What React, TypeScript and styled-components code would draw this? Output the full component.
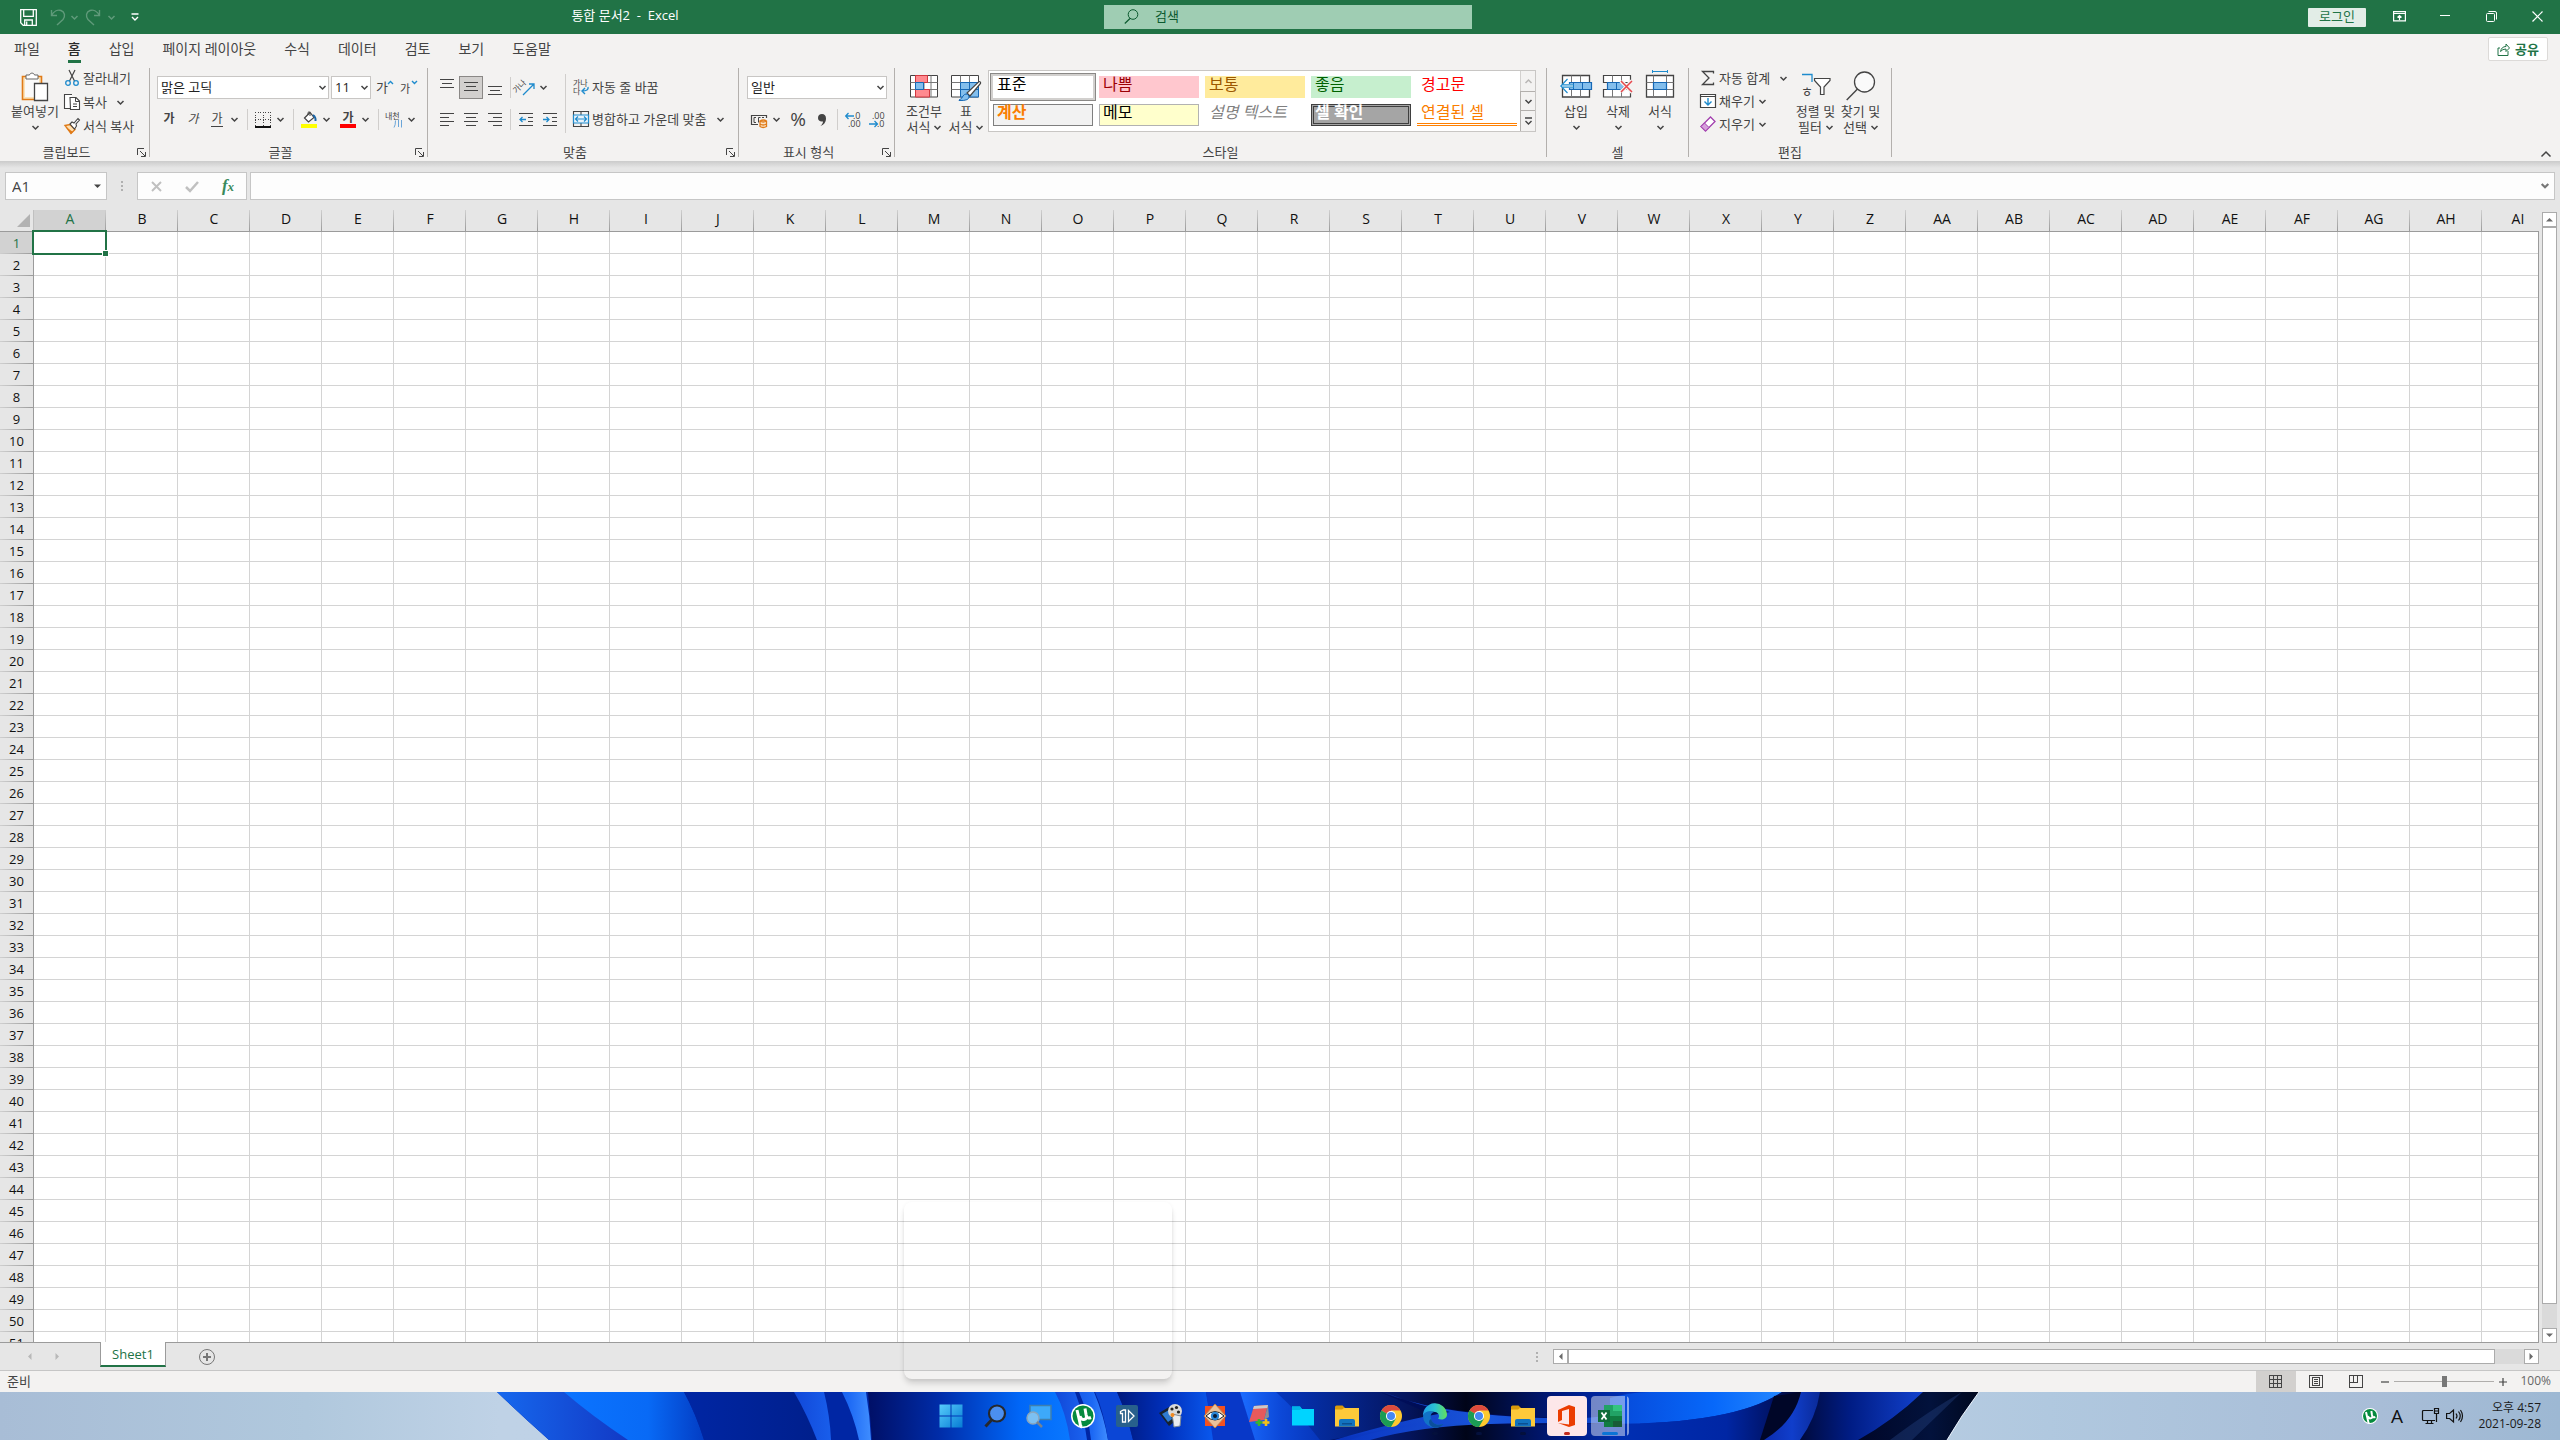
import React from 'react';
import styled, { createGlobalStyle, css } from 'styled-components';

const UI_FONT = '"Open Sans", "Noto Sans CJK KR", "Noto Sans", sans-serif';
const GREEN = '#217346';
const INK = '#444444';
const LINE = '#9b9b9b';
const BLUE = '#1e8bcd';

const GlobalStyle = createGlobalStyle`
  *, *::before, *::after { box-sizing: border-box; }
  body { margin: 0; background: #e6e6e6; overflow: hidden; }
  body, button, input, select, table {
    font-family: ${UI_FONT};
    font-size: 13px;
    line-height: 16px;
    color: ${INK};
  }
  button {
    display: inline-flex; align-items: center; justify-content: center;
    margin: 0; padding: 0; border: 0; background: none; white-space: nowrap;
  }
  input, select { margin: 0; border-radius: 0; outline: 0; }
  svg { display: block; flex: none; overflow: visible; }
`;

/* ---------- Frame ---------- */

const Window = styled.div`
  display: flex; flex-direction: column; height: 100vh; overflow: hidden;
`;

const TitleBar = styled.header`
  display: grid; grid-template-columns: 1104fr 368px 1088fr; align-items: center;
  flex: none; height: 34px; background: ${GREEN}; color: #fff;
`;
const TitleLeft = styled.div`display: flex; align-items: center;`;
const QuickAccess = styled.div`
  display: flex; align-items: center; gap: 3px; width: 146px; padding-left: 16px;
`;
const QuickButton = styled.button<{ $w?: number; $dim?: boolean }>`
  width: ${p => p.$w ?? 24}px; height: 24px; color: #fff; opacity: ${p => (p.$dim ? 0.28 : 1)};
`;
const DocTitle = styled.h1`
  flex: 1; margin: 0; padding-bottom: 4px; font-size: 13px; line-height: 16px; font-weight: 400;
  text-align: center; white-space: pre; color: #fff;
`;
const SearchBox = styled.label`
  display: flex; align-items: center; gap: 16px; height: 24px; padding-left: 20px; padding-bottom: 2px;
  background: #9fcdb3; color: #0b5a2f;
  input { flex: 1; min-width: 0; padding: 0; border: 0; background: none; color: #0b5a2f; }
  input::placeholder { color: #0b5a2f; opacity: 1; }
`;
const TitleRight = styled.div`display: flex; align-items: center; justify-content: flex-end;`;
const LoginButton = styled.button`
  width: 58px; height: 19px; margin: 0 10px 0 0; padding-bottom: 2px; border-radius: 1px; background: #e2ede7; color: ${GREEN};
`;
const WindowButton = styled.button`width: 46px; height: 34px; padding-bottom: 2px; color: #fff;`;

/* ---------- Ribbon ---------- */

const TabBar = styled.nav`
  display: flex; align-items: center; flex: none; height: 32px; background: #f3f2f1; padding-right: 12px;
`;
const Tab = styled.a<{ $active?: boolean }>`
  display: flex; flex-direction: column; margin: 0 14px; font-size: 14px; line-height: 22px;
  color: ${p => (p.$active ? '#2b2b2b' : INK)}; text-decoration: none; white-space: nowrap;
  font-weight: ${p => (p.$active ? 500 : 400)};
  &::after { content: ''; height: 3px; background: ${p => (p.$active ? GREEN : 'transparent')}; }
`;
const ShareButton = styled.button`
  gap: 5px; width: 60px; height: 24px; margin-left: auto; margin-bottom: 2px; border: 1px solid #dcdad8; border-radius: 2px;
  background: #fff; color: ${GREEN}; font-weight: 700;
`;
const Ribbon = styled.section`
  display: flex; flex: none; height: 95px; padding: 2px 0 4px; background: #f3f2f1;
`;
const Group = styled.div<{ $w: number }>`
  display: flex; flex-direction: column; flex: none; width: ${p => p.$w}px; border-right: 1px solid #b3b0ad;
`;
const GroupBody = styled.div<{ $left: number }>`
  display: flex; flex: 1; min-height: 0; padding-left: ${p => p.$left}px;
`;
const GroupFoot = styled.div`
  display: flex; align-items: flex-end; flex: none; height: 11px;
  span { flex: 1; text-align: center; line-height: 10px; }
  button { width: 16px; height: 9px; }
`;
const Lines = styled.div`display: flex; flex-direction: column; gap: 9px; padding-top: 8px;`;
const Line = styled.div`display: flex; align-items: center; height: 23px;`;
const List = styled.div<{ $gap: number; $w?: number }>`
  display: flex; flex-direction: column; gap: ${p => p.$gap}px;
  ${p => p.$w && css`width: ${p.$w}px;`}
`;
const ListItem = styled.div<{ $gap?: number }>`
  display: flex; align-items: center; height: 22px; gap: ${p => p.$gap ?? 6}px;
`;
const TextButton = styled.button`gap: 3px; height: 22px; padding-bottom: 2px;`;
const Tool = styled.button<{ $on?: boolean }>`
  width: 24px; height: 23px;
  ${p => p.$on && css`background: #d2d0ce; box-shadow: inset 0 0 0 1px #8a8886;`}
`;
const Drop = styled.button`width: 11px; height: 23px; margin-right: 1px; padding-bottom: 1px;`;
const Sep = styled.span<{ $lead?: number }>`
  flex: none; width: 1px; height: 21px; margin: 0 3px 0 ${p => p.$lead ?? 3}px; background: #d0cecc;
`;
const TallSep = styled.span`width: 1px; height: 59px; margin: 6px 7px 0 3px; background: #d0cecc;`;
const BigButton = styled.button<{ $w: number }>`
  flex-direction: column; justify-content: flex-start; flex: none; width: ${p => p.$w}px; padding-top: 2px;
`;
const BigIcon = styled.span`display: flex; align-items: center; justify-content: center; height: 32px; margin-bottom: 1px;`;
const BigLine = styled.span`display: flex; align-items: center; justify-content: center; gap: 4px; height: 16px;`;
const Spacer = styled.span`width: 3px;`;

const ComboBox = styled.span<{ $w: number }>`
  display: grid; width: ${p => p.$w}px; height: 23px; margin-right: 2px; background: #fff; border: 1px solid #c8c6c4;
  > * { grid-area: 1 / 1; }
  svg { justify-self: end; align-self: center; margin-right: 2px; pointer-events: none; }
  select { appearance: none; width: 100%; border: 0; padding: 0 3px 2px; background: none; color: #222; }
`;
const Glyph = styled.span<{ $b?: boolean; $i?: boolean; $u?: boolean; $size?: number }>`
  font-size: ${p => p.$size ?? 12}px; line-height: 14px; font-weight: ${p => (p.$b ? 700 : 400)};
  font-style: ${p => (p.$i ? 'italic' : 'normal')};
  border-bottom: 1px solid ${p => (p.$u ? INK : 'transparent')};
`;

/* ---------- Style gallery ---------- */

const Gallery = styled.div`
  display: flex; width: 548px; height: 62px; margin: 2px 0 0 1px; border: 1px solid #c8c6c4; background: #fff;
`;
const Swatches = styled.div`
  display: grid; grid-template-columns: repeat(5, 100px); gap: 6px; flex: 1; align-content: start; padding: 5px 0 0 4px;
`;
type Look = { bg?: string; fg: string; line?: string; look?: 'picked' | 'check' | 'linked' | 'note' | 'bold' };
const Swatch = styled.button<{ $s: Look }>`
  justify-content: flex-start; align-items: flex-start; height: 22px; padding-left: 4px; font-size: 16px; line-height: 17px;
  background: ${p => p.$s.bg ?? 'transparent'}; color: ${p => p.$s.fg};
  box-shadow: ${p => (p.$s.line ? `inset 0 0 0 1px ${p.$s.line}` : 'none')};
  ${p => p.$s.look === 'picked' && css`box-shadow: 0 0 0 2px #d2d0ce, 0 0 0 3px #8a8886;`}
  ${p => p.$s.look === 'check' && css`font-weight: 700; box-shadow: inset 0 0 0 1px #3f3f3f, inset 0 0 0 2px #a5a5a5, inset 0 0 0 3px #3f3f3f;`}
  ${p => p.$s.look === 'bold' && css`font-weight: 700;`}
  ${p => p.$s.look === 'note' && css`font-style: italic;`}
  ${p => p.$s.look === 'linked' && css`border-bottom: 3px double #ff8001;`}
`;
const GalleryScroll = styled.div`
  display: grid; grid-template-rows: 20px 19px 21px; width: 15px; background: #f3f2f1;
  button { border-left: 1px solid #b3b0ad; border-top: 1px solid #b3b0ad; }
  button:first-child { border-color: #d2d0ce; border-top: 0; }
`;
const CollapseButton = styled.button`width: 20px; height: 6px; margin: auto 4px 0 auto;`;

/* ---------- Formula bar ---------- */

const FormulaBar = styled.div`
  display: flex; flex: none; height: 49px; padding: 11px 5px 10px;
  background: linear-gradient(#cbcbcb, #e6e6e6 7px);
`;
const FieldBox = styled.div<{ $w?: number }>`
  display: flex; align-items: center; height: 28px; border: 1px solid #c6c6c6; background: #fdfdfd;
  ${p => (p.$w ? css`width: ${p.$w}px;` : css`flex: 1;`)}
  input { flex: 1; min-width: 0; height: 26px; padding: 0 6px; border: 0; background: none; font-size: 15px; }
  button { width: 18px; height: 26px; }
`;
const MarkBox = styled(FieldBox)`
  justify-content: space-between; padding: 0 6px; margin-right: 3px;
  button { width: 24px; }
`;
const Grip = styled.span<{ $before: number; $after: number }>`
  width: 2px; height: 10px; align-self: center; margin: 0 ${p => p.$after}px 0 ${p => p.$before}px;
  background: repeating-linear-gradient(#b0b0b0 0 2px, transparent 2px 4px);
`;
const FxMark = styled.i`
  font-family: "Liberation Serif", serif; font-size: 13px; font-weight: 700; color: #3a8a5c;
  b { font-size: 17px; }
`;

/* ---------- Sheet ---------- */

const SheetArea = styled.main`display: flex; flex: 1; min-height: 0; background: #e6e6e6;`;
const SheetPane = styled.div`
  display: flex; flex: 1; min-width: 0; padding: 0 1px 1px 0;
  background: linear-gradient(#e6e6e6 21px, ${LINE} 21px);
`;
const SheetClip = styled.div`flex: 1; min-width: 0; overflow: hidden; background: #e6e6e6;`;
const Sheet = styled.table`
  table-layout: fixed; border-collapse: separate; border-spacing: 0; width: 2554px; color: #111;
  th, td { height: 22px; padding: 0; line-height: 20px; font-weight: 400; text-align: center; }
  thead th { padding-bottom: 3px; line-height: 18px; }
  td { background: #fff; border-right: 1px solid #d4d4d4; border-bottom: 1px solid #d4d4d4; }
`;
const ColHead = styled.th<{ $on?: boolean }>`
  width: 72px; font-size: 14px; border-bottom: 1px solid ${LINE};
  color: ${p => (p.$on ? GREEN : '#111')};
  background: linear-gradient(#cfcfcf, ${LINE}) right / 1px 100% no-repeat, ${p => (p.$on ? '#d2d2d2' : '#e6e6e6')};
`;
const RowHead = styled.th<{ $on?: boolean }>`
  border-right: 1px solid ${LINE};
  color: ${p => (p.$on ? GREEN : '#111')};
  background: linear-gradient(90deg, #cfcfcf, ${LINE}) bottom / 100% 1px no-repeat, ${p => (p.$on ? '#d2d2d2' : '#e6e6e6')};
`;
const Corner = styled.th`
  width: 34px; border-right: 1px solid #c0c0c0; border-bottom: 1px solid ${LINE};
  svg { margin: 2px 3px 0 auto; }
`;
const ActiveCell = styled.td`
  position: relative;
  &::before { content: ''; position: absolute; inset: -2px; border: 2px solid ${GREEN}; }
  &::after {
    content: ''; position: absolute; right: -4px; bottom: -4px; width: 7px; height: 7px;
    border: 1px solid #fff; background: ${GREEN};
  }
`;

const VScroll = styled.div`display: flex; flex-direction: column; width: 21px; padding: 2px 3px 0;`;
const HScroll = styled.div`display: flex; width: 986px; margin-right: 21px;`;
const ScrollButton = styled.button`
  flex: none; width: 15px; height: 15px; background: #fff; border: 1px solid #ababab; color: #6a6a6a;
`;
const VTrack = styled.div`
  flex: 1; padding-bottom: 24px; background: #dadada;
  div { height: 100%; background: #fff; border: 1px solid #ababab; }
`;
const HTrack = styled.div`
  flex: 1; padding-right: 29px; background: #dadada;
  div { height: 15px; background: #fff; border: 1px solid #ababab; }
`;

const SheetTabs = styled.div`
  display: flex; align-items: center; flex: none; height: 28px; padding-left: 15px; background: #e6e6e6; border-bottom: 1px solid #c6c6c6;
`;
const NavButton = styled.button`width: 28px; height: 24px; color: #b8b8b8;`;
const SheetTab = styled.button`
  align-self: flex-start; width: 66px; height: 25px; margin: -1px 32px 0 29px; background: #fff; color: ${GREEN};
  border: 1px solid ${LINE}; border-top: 0; border-bottom: 2px solid ${GREEN}; font-weight: 500;
`;
const AddSheet = styled.button`width: 18px; height: 18px;`;
const Push = styled.span`flex: 1;`;

const StatusBar = styled.footer`
  display: flex; align-items: center; flex: none; height: 21px; padding-left: 7px; padding-right: 9px; background: #f3f2f1;
  > span { padding-bottom: 1px; }
`;
const ViewButton = styled.button<{ $on?: boolean }>`
  width: 40px; height: 21px; background: ${p => (p.$on ? '#d2d0ce' : 'none')};
`;
const ZoomStep = styled.button`width: 12px; height: 16px;`;
const ZoomSlider = styled.input`
  appearance: none; width: 100px; height: 12px; margin: 0 3px; background: linear-gradient(#b0aeac, #b0aeac) center / 100% 1px no-repeat;
  &::-webkit-slider-thumb { appearance: none; width: 5px; height: 11px; background: #777; }
`;
const ZoomValue = styled.span`width: 41px; margin-left: 1px; font-size: 12px; text-align: right; color: #666;`;

/* ---------- Taskbar ---------- */

const PreviewShade = styled.div`
  position: fixed; left: calc(50% - 376px); bottom: 61px; width: 268px; height: 177px; border-radius: 8px;
  box-shadow: 0 5px 6px -1px rgba(0, 0, 0, 0.16), 0 1px 4px rgba(0, 0, 0, 0.06); pointer-events: none;
`;
const TaskBar = styled.div`
  position: relative; display: grid; grid-template-columns: 1fr auto 1fr; align-items: center; flex: none; height: 48px;
`;
const Wallpaper = styled.svg`position: absolute; inset: 0; width: 100%; height: 100%;`;
const Pinned = styled.div`position: relative; grid-column: 2; display: flex; padding-left: 2px;`;
const Pin = styled.button<{ $state?: 'alert' | 'open' }>`
  position: relative; width: 40px; height: 40px; margin: 0 2px; border-radius: 4px;
  ${p => p.$state === 'alert' && css`background: #fde7e9;`}
  ${p => p.$state === 'open' && css`
    width: 38px; margin: 0 4px 0 2px; background: linear-gradient(90deg, rgba(255,255,255,.45) 34px, transparent 34px 36px, rgba(255,255,255,.5) 36px);
  `}
`;
const Marker = styled.i<{ $c: string; $w: number }>`
  position: absolute; left: 50%; bottom: 1px; width: ${p => p.$w}px; height: 3px; margin-left: -${p => p.$w / 2}px;
  border-radius: 2px; background: ${p => p.$c};
`;
const Tray = styled.div`
  position: relative; display: flex; align-items: center; justify-content: flex-end; padding-right: 19px; color: #111;
`;
const TrayButton = styled.button<{ $w: number }>`width: ${p => p.$w}px; height: 32px; color: #111; font-size: 19px;`;
const Clock = styled.time`
  width: 77px; margin-left: 1px; font-size: 12px; line-height: 16px; text-align: right; color: #1b1b1b; white-space: nowrap;
`;

/* ---------- Icons ---------- */

const Chevron = ({ up, color = INK }: { up?: boolean; color?: string }) => (
  <svg width="7" height="5" viewBox="0 0 7 5" fill="none" stroke={color} strokeWidth="1.5">
    <path d={up ? 'M.5 4l3-3 3 3' : 'M.5 1l3 3 3-3'} />
  </svg>
);
const Tri = ({ d }: { d: string }) => <svg width="7" height="7" viewBox="0 0 7 7" fill="currentColor"><path d={d} /></svg>;
const UP = 'M0 5.5h7L3.5 2z', DOWN = 'M0 1.5h7L3.5 5z', LEFT = 'M5.5 0v7L2 3.5z', RIGHT = 'M1.5 0v7L5 3.5z';

const Svg = ({ w = 16, h = 16, children, ...rest }: React.SVGProps<SVGSVGElement> & { w?: number; h?: number }) => (
  <svg width={w} height={h} viewBox={`0 0 ${w} ${h}`} fill="none" stroke={INK} {...rest}>{children}</svg>
);

const Launcher = () => <Svg w={9} h={9}><path d="M.5 7V.5H7M3 3l5 5M8.500 4v4.500H4" /></Svg>;
const SaveIcon = () => <Svg w={17} h={17} stroke="currentColor"><path d="M.7.7h15.600v15.600H3.200L.7 13.800zM3.700 1v6.300h9.600V1M4.700 16v-5h7.600v5M6.700 12.500V16" strokeWidth="1.300" /></Svg>;
const UndoIcon = () => <Svg stroke="currentColor"><path d="M1.500 1v5.500H7M1.500 6.500C4 2 8 .5 11 1.500c4 1.500 4.500 6 2 9L7 16" strokeWidth="1.400" /></Svg>;
const RedoIcon = () => <Svg stroke="currentColor"><path d="M14.500 1v5.500H9M14.500 6.500C12 2 8 .5 5 1.500c-4 1.500-4.500 6-2 9L9 16" strokeWidth="1.400" /></Svg>;

const PasteIcon = () => (
  <Svg w={28} h={31}>
    <path d="M1.500 5.500h19v23h-19z" fill="#fbe3b9" stroke="#e07b18" strokeWidth="1.600" />
    <path d="M4 8h14v18H4z" fill="#fafafa" stroke="none" />
    <path d="M5 8V4h3.500C9 1.500 13 1.500 13.500 4H17v4z" fill="#fff" stroke="#666" />
    <path d="M13.500 12.500h13v17h-13z" fill="#fff" strokeWidth="1.300" />
  </Svg>
);
const CutIcon = () => (
  <Svg><path d="M5 0l5.500 11M11 0L5.500 11" strokeWidth="1.200" /><g stroke={BLUE} strokeWidth="1.300"><circle cx="4" cy="13" r="2.300" /><circle cx="12" cy="13" r="2.300" /></g></Svg>
);
const CopyIcon = () => (
  <Svg><path d="M6.500 14.500h-6V.5H8M6 3.500h6l3.500 3.500v8.500H6.500z" fill="#fff" strokeWidth="1.100" /><path d="M11.500 3.500v4h4M9 10h4M9 12.500h4" /></Svg>
);
const BrushIcon = () => (
  <Svg><path d="M1 7.500l5-1 5 5-4 4z" fill="#ffe0b0" stroke="#e07b18" strokeWidth="1.400" /><path d="M2 9l7 5-2 2z" fill="#e07b18" stroke="none" /><path d="M6 6l2-2 2 1 4-4.500 1.500 1.500L12 6l.5 2-2 3z" fill="#fff" strokeWidth="1.100" /></Svg>
);
const BordersIcon = () => (
  <Svg shapeRendering="crispEdges"><path d="M.5 0v14M15.500 0v14M0 .5h16M8 0v14M0 7.500h16" strokeDasharray="1 1.500" /><path d="M0 15h16" stroke="#111" strokeWidth="2" /></Svg>
);
const FillIcon = () => (
  <Svg w={16} h={17}><path d="M3.500 7L9 1.500l4 5L7.500 11z" fill="#fff" strokeWidth="1.200" /><path d="M7 4V1.500Q8 0 9 1.500V5" /><path d="M12 4q3 2 2.500 6" stroke="#1a66a8" strokeWidth="2" /><path d="M0 13h16v4H0z" fill="#ff0" stroke="none" /></Svg>
);
const ColorBar = styled.span`
  display: flex; flex-direction: column; align-items: center; width: 16px; border-bottom: 4px solid #f00;
  font-size: 12px; line-height: 13px; font-weight: 700;
`;
const KoText = ({ x, y, size = 8, children, ...rest }: React.SVGProps<SVGTextElement> & { size?: number }) => (
  <text x={x} y={y} fontSize={size} fill={INK} stroke="none" {...rest}>{children}</text>
);
const PhoneticIcon = () => (
  <Svg w={18} h={17}><KoText x="0" y="8" size={8}>내천</KoText><path d="M10.500 9.500q0 5-1.500 7M13.500 9v7M16.500 9v7.500" stroke="#6aa5d8" /></Svg>
);
const GrowIcon = ({ down }: { down?: boolean }) => (
  <Svg w={18} h={16}>
    <KoText x="0" y={down ? 13 : 12} size={down ? 11 : 13}>가</KoText>
    <path d={down ? 'M12 1l2.500 2.500L17 1' : 'M12 4l2.500-2.500L17 4'} stroke={BLUE} strokeWidth="1.400" />
  </Svg>
);

/* Horizontal text lines: each entry is [start, end] at a 4px pitch. */
const TextLines = ({ rows, top = 1 }: { rows: number[][]; top?: number }) => (
  <Svg w={14} h={13} shapeRendering="crispEdges">
    <path d={rows.map((r, i) => `M${r[0]} ${top + i * 4 + 0.5}H${r[1]}`).join('')} />
  </Svg>
);
const SHORT = [[0, 14], [2, 12], [0, 14]];
const L4 = [[0, 14], [0, 9], [0, 14], [0, 9]];
const C4 = [[0, 14], [2, 12], [0, 14], [2, 12]];
const R4 = [[0, 14], [5, 14], [0, 14], [5, 14]];

const OrientIcon = () => (
  <Svg w={17}><KoText x="-4" y="8" size={8} transform="rotate(-45 4 8)">가나</KoText><path d="M5 15L15.500 4.500M11 4h5v5" stroke={BLUE} strokeWidth="1.300" /></Svg>
);
const IndentIcon = ({ more }: { more?: boolean }) => (
  <Svg w={14} h={13} shapeRendering="crispEdges">
    <path d="M0 .5h14M9 4.500h5M9 8.500h5M0 12.500h14" />
    <path d={more ? 'M0 6.500h6M3.500 4l2.500 2.500L3.500 9' : 'M1 6.500h6M3.500 4L1 6.500 3.500 9'} stroke={BLUE} shapeRendering="auto" strokeWidth="1.300" />
  </Svg>
);
const WrapIcon = () => (
  <Svg><KoText x="0" y="7">가나</KoText><KoText x="0" y="15">다</KoText><path d="M15 8q1 4-6 4M12 9l-3 3 3 3" stroke={BLUE} strokeWidth="1.400" /></Svg>
);
const MergeIcon = () => (
  <Svg><path d="M.5.5h15v15H.5zM8 .5v4M8 12v3.500" strokeWidth="1.100" /><path d="M.5 4h15v8H.5zM3 8h10M5 5.500L2.500 8 5 10.500M11 5.500L13.500 8 11 10.500" fill="#e8f3fb" stroke={BLUE} strokeWidth="1.200" /></Svg>
);
const MoneyIcon = () => (
  <Svg w={17}><path d="M15.500 6V3.500H.5v9H7" strokeWidth="1.200" /><path d="M5 5.500H3v5h2M9.500 5.500H7.500v5M11 5.500h2" /><path d="M9 9v5.500q3 2 6.500 0V9q-3-2-6.500 0q3 2 6.500 0M9 12q3 2 6.500 0" fill="#fbe3c8" stroke="#e07b18" strokeWidth="1.300" /></Svg>
);
const CommaIcon = () => <Svg w={8} h={12}><path d="M4 0c2.500 0 4 1.500 4 4.500 0 4-2.500 6.500-5.500 7.500C4 10.500 5 9 5 7.500 2 8 0 6.500 0 4c0-2.500 1.500-4 4-4z" fill={INK} stroke="none" /></Svg>;
const DecimalIcon = ({ less }: { less?: boolean }) => (
  <Svg w={17}>
    <text fontSize="9" fill={INK} stroke="none"><tspan x={less ? 3 : 8} y="7">{less ? '.00' : '.0'}</tspan><tspan x={less ? 8 : 3} y="15">{less ? '.0' : '.00'}</tspan></text>
    <path d={less ? 'M0 12h8M5.500 9L8.500 12l-3 3' : 'M9 4H1M3.500 1L.7 4l2.800 3'} stroke={BLUE} strokeWidth="1.300" />
  </Svg>
);

const CondIcon = () => (
  <Svg w={28} h={28}>
    <path d="M.5 3.500h27v21.500H.5z" fill="#fff" /><path d="M7 3.500V25M14 3.500V25M21 3.500V25M.5 10.500h27M.5 17.500h27" stroke="#777" />
    <path d="M5.500 3.500h12v7h-12zM5.500 17.500h14V25h-14z" fill="#ff8a8f" stroke="#d1373f" /><path d="M5.500 10.500h8v7h-8z" fill="#83beec" stroke="#1668b5" />
  </Svg>
);
const TableIcon = () => (
  <Svg w={30} h={28}>
    <path d="M.5 3.500h27v21.500H.5z" fill="#fff" /><path d="M9.500 3.500V25M18.500 3.500V25M.5 10.500h27M.5 17.500h27" stroke="#777" />
    <path d="M9.500 10.500h18V25h-18z" fill="#83beec" stroke="#1668b5" /><path d="M9.500 17.500h18M18.500 10.500V25" stroke="#1668b5" />
    <path d="M28 9.500q2 0 1.500 2L19 24l-3-3z" fill="#fff" strokeWidth="1.200" /><path d="M8 28q3-1 4-4 3-4 6 0 1 5-10 4.500z" fill="#83beec" stroke="#1668b5" />
  </Svg>
);
const InsertIcon = () => (
  <Svg w={32} h={28}>
    <path d="M2.500 3.500h27v21.500h-27z" fill="#fff" strokeWidth="1.300" /><path d="M11.500 3.500V25M20.500 3.500V25" stroke="#777" />
    <path d="M9.500 10.500h22v7h-22z" fill="#83beec" stroke="#1668b5" strokeWidth="1.200" /><path d="M13.500 11v6M22.500 11v6" stroke="#1668b5" />
    <path d="M0 14h13" stroke="#fff" strokeWidth="4" /><path d="M7.500 7L.8 14l6.700 7M2 12.800h12M2 15.200h12" stroke={BLUE} strokeWidth="1.200" />
  </Svg>
);
const DeleteIcon = () => (
  <Svg w={30} h={28}>
    <path d="M.5 3.500h27v7H.5zM.5 17.500h27V25H.5z" fill="#fff" strokeWidth="1.200" /><path d="M9.500 3.500v7M18.500 3.500v7M9.500 17.500V25M18.500 17.500V25" stroke="#777" />
    <path d="M4.500 10.500h14l3 3.500-3 3.500h-14z" fill="#83beec" stroke="#1668b5" strokeWidth="1.200" /><path d="M13.500 11v6" stroke="#1668b5" />
    <path d="M18 9l11 11M29 9L18 20" stroke="#f3f2f1" strokeWidth="4" /><path d="M18 9l11 11M29 9L18 20" stroke="#e8474c" strokeWidth="1.500" />
  </Svg>
);
const FormatIcon = () => (
  <Svg w={28} h={32}>
    <path d="M.5 5.500h27v21.500H.5z" fill="#fff" strokeWidth="1.300" /><path d="M7.500 5.500V27M20.500 5.500V27M.5 12.500h27M.5 19.500h27" stroke="#777" />
    <path d="M7.500 12.500h13v7h-13z" fill="#83beec" stroke="#1668b5" strokeWidth="1.200" /><path d="M6.500 1.500h15M6.500 0v3M21.500 0v3" stroke={BLUE} />
  </Svg>
);
const SumIcon = () => <Svg><path d="M13.500 3.500V1.500H2.500L9 8l-6.500 6.500h11v-2" strokeWidth="1.300" /></Svg>;
const FillDownIcon = () => <Svg><path d="M.5 1.500h15v13H.5zM.5 3.500h15" fill="#fff" strokeWidth="1.200" /><path d="M8 5v7M4.500 8.500L8 12l3.500-3.500" stroke={BLUE} strokeWidth="1.400" /></Svg>;
const EraserIcon = () => <Svg><path d="M1 10.500L10.500 1l4.500 4.500L5.500 15z" fill="#fff" stroke="#a23fae" strokeWidth="1.300" /><path d="M1 10.500L4.500 7 9 11.500 5.500 15z" fill="#d6a0dc" stroke="#a23fae" /></Svg>;
const SortIcon = () => (
  <Svg w={30} h={24}><path d="M1 .5h10V8" stroke={BLUE} strokeWidth="1.300" /><KoText x="0" y="22" size={13}>ㅎ</KoText><path d="M13.500 4.500h15.500v2L23 13v7.500h-3.500V13l-6-6.500z" fill="#fff" strokeWidth="1.200" /></Svg>
);
const FindIcon = () => <Svg w={30} h={30}><circle cx="18.500" cy="11" r="10" fill="#fafafa" strokeWidth="1.300" /><path d="M11.500 18L.7 29" strokeWidth="1.400" /></Svg>;
const ShareIcon = () => <Svg w={13} h={13} stroke="currentColor"><path d="M3 5H1v7.500h10V8M3.500 8.500q1-5 5.500-5V1l3.500 4L9 8.500V6q-3.500 0-5.500 2.500z" /></Svg>;

/* ---------- Taskbar icons ---------- */

const Torrent = ({ size = 24 }: { size?: number }) => (
  <svg width={size} height={size} viewBox="0 0 24 24">
    <circle cx="12" cy="12" r="12" fill="#fff" /><circle cx="12" cy="12" r="10.500" fill="#058a3e" />
    <path d="M6 6l3 13q.3 3.500 2 4M9 12q1 4 4 3.500 3.500-.5 2-5L14 4.500M15.500 12q1 3 4.500 1.500" fill="none" stroke="#fff" strokeWidth="3" />
  </svg>
);
const Chrome = () => (
  <svg width="22" height="22" viewBox="0 0 24 24">
    <circle cx="12" cy="12" r="12" fill="#fdc92f" />
    <path d="M12 12L1.600 6A12 12 0 0 1 22.400 6H12z" fill="#dd4b3e" /><path d="M12 12L1.600 6A12 12 0 0 0 12 24l5.200-9z" fill="#1b9c55" />
    <circle cx="12" cy="12" r="5.500" fill="#fff" /><circle cx="12" cy="12" r="4.400" fill="#4587f3" />
  </svg>
);
const Explorer = () => (
  <svg width="24" height="22" viewBox="0 0 24 22">
    <path d="M0 2q0-1.500 1.500-1.500h6L10 3v3H0z" fill="#d99a0b" /><path d="M0 4.500h7L9 3h15v18.500H0z" fill="#fdc93a" /><path d="M4 21.500V16q0-2 2-2h12q2 0 2 2v5.500z" fill="#1273c0" /><path d="M7 18h10v1.500H7z" fill="#0b4f91" />
  </svg>
);
const StartIcon = () => (
  <svg width="24" height="24" viewBox="0 0 24 24">
    <defs><linearGradient id="win" x2="1" y2="1"><stop stopColor="#57cdfb" /><stop offset="1" stopColor="#067bd4" /></linearGradient></defs>
    <path d="M.5.500h11v11H.5zM12.500.500h11v11h-11zM.5 12.500h11v11H.5zM12.500 12.500h11v11h-11z" fill="url(#win)" />
  </svg>
);
const TaskSearch = () => <svg width="24" height="24" viewBox="0 0 24 24"><circle cx="14" cy="9.500" r="8" fill="#4b8ff0" stroke="#26282c" strokeWidth="2.200" /><path d="M8.500 16L2.500 22.500" stroke="#26282c" strokeWidth="3" /></svg>;
const TaskView = () => <svg width="26" height="24" viewBox="0 0 26 24"><path d="M4 1.500h21v14H4z" fill="#3da9fa" stroke="#3f7fae" strokeWidth="1.500" /><circle cx="7" cy="14" r="6" fill="#7cc0f2" stroke="#8aa6bd" strokeWidth="1.500" /><path d="M11 18l5 5" stroke="#758392" strokeWidth="2.500" /></svg>;
const OneD = () => (
  <svg width="22" height="22" viewBox="0 0 22 22"><rect width="22" height="22" rx="2" fill="#28608c" /><path d="M4.500 6.500l3-1.500h2v12h-3V8.500h-2zM12.500 5.500v11L18 11z" fill="none" stroke="#fff" strokeWidth="1.300" /></svg>
);
const Reel = () => (
  <svg width="26" height="24" viewBox="0 0 26 24">
    <path d="M1 9l10-6 5 15-5 4z" fill="#17222e" /><path d="M4 10l7-4 3 9-4 3z" fill="#2f7bd0" /><circle cx="17" cy="7" r="7" fill="#d9d9d9" /><g fill="#222"><circle cx="14" cy="5" r="1.600" /><circle cx="18.500" cy="3.500" r="1.600" /><circle cx="20.500" cy="8" r="1.600" /></g>
    <path d="M14 10l9 2-1 10-6 1z" fill="#e9ecf0" stroke="#7c8a99" /><circle cx="14.500" cy="11" r="2" fill="#f08a24" />
  </svg>
);
const EyeIcon = () => (
  <svg width="24" height="24" viewBox="0 0 24 24"><path d="M2 2h20v20H2z" fill="#f4511e" /><path d="M12 0l11 12-11 12L1 12z" fill="#eac19a" stroke="#b97d4d" /><path d="M3 12q9-9 18 0-9 8-18 0z" fill="#fff" stroke="#222" /><circle cx="12" cy="12" r="4.200" fill="#2a86d6" /><circle cx="12" cy="12" r="2" fill="#0a1b33" /></svg>
);
const NoteIcon = () => (
  <svg width="24" height="24" viewBox="0 0 24 24"><path d="M7 2l14-1-4 15-15 2z" fill="#e65a5c" /><path d="M7 2l14-1v3L6 5z" fill="#c9c9c9" /><path d="M17 16l4-15 1 12z" fill="#8b8f94" /><path d="M12 15v7M8.500 18.500h7" stroke="#3cb52d" strokeWidth="2.600" /><path d="M19 15v7M15.500 18.500h7" stroke="#f3c21a" strokeWidth="2.600" /></svg>
);
const CyanFolder = () => <svg width="22" height="20" viewBox="0 0 22 20"><path d="M0 .500h8l2 2.500h12v16.500H0z" fill="#00d4ff" /><path d="M0 .500h8l1.500 2L8 4H0z" fill="#00b4e8" /></svg>;
const Edge = () => (
  <svg width="24" height="24" viewBox="0 0 24 24">
    <defs><linearGradient id="eg" x2="1"><stop stopColor="#1f9fe8" /><stop offset=".5" stopColor="#2cc3d2" /><stop offset="1" stopColor="#63e05c" /></linearGradient></defs>
    <path d="M0 12A12 12 0 0 1 24 10.500c0 5-6 6-9 4 2-2 1-6-3-6.500C6 7 1 9 0 12z" fill="url(#eg)" /><path d="M0 12c1-4 6-6 11-4-3 1-4 4-3 7 1.500 5 7 7 12.500 5A12 12 0 0 1 0 12z" fill="#1273c8" /><path d="M8 15c1.500 5 7 7 12.500 5-3 4-9 5-12.500 2-3-3-2-6 0-7z" fill="#0b4f9c" />
  </svg>
);
const Office = () => <svg width="20" height="22" viewBox="0 0 20 22"><path d="M12 0l6 2v18l-6 2-11-4 11 1.500V4L5 6v9l-4 2V5z" fill="#eb3c00" /></svg>;
const ExcelIcon = () => (
  <svg width="24" height="22" viewBox="0 0 24 22">
    <path d="M6 0h18v22H6z" fill="#21a366" /><path d="M15 0h9v6h-9z" fill="#33c481" /><path d="M6 11h18v11H6z" fill="#107c41" /><path d="M15 16h9v6h-9z" fill="#185c37" /><path d="M0 5h12v12H0z" fill="#0f6b39" />
    <path d="M3.500 7.500l5 7M8.500 7.500l-5 7" stroke="#fff" strokeWidth="1.800" />
  </svg>
);

const Backdrop = () => (
  <Wallpaper viewBox="0 0 2560 48" preserveAspectRatio="none" aria-hidden="true">
    <defs>
      {([
        ['sky', ['0:#a8bdd6', '.12:#b0c8dd', '.195:#bfd2e6', '.7:#bccfe4', '.8:#b0c8df', '.93:#a8bdd7', '1:#9db8d3']],
        ['g1', ['0:#1668ee', '1:#1238c4']], ['g2', ['0:#0b74ff', '.6:#086af6', '1:#033dc4']], ['g3', ['0:#0026a4', '1:#001f8c']],
        ['g4', ['0:#1148d8', '.7:#1c68f4', '1:#3f8dff']],
        ['g5', ['0:#000f66', '.35:#002ca8', '.75:#0067f8', '1:#0a78ff']], ['g6', ['0:#00187c', '.5:#0030bc', '1:#0a5af0']],
        ['g7', ['0:#1b6cff', '.5:#0c48d8', '1:#0634b8']], ['g8', ['0:#0536bc', '.35:#04145c', '.5:#000418', '.75:#001a80', '1:#0038c8']],
        ['g9', ['0:#0a38cc', '.5:#1e62f4', '1:#0a46d4']], ['g10', ['0:#0648d8', '.6:#0768fa', '1:#2386ff']],
        ['g11', ['0:#0030b4', '.6:#0026a4', '.85:#001262', '1:#000320']], ['g12', ['0:#0b2cae', '.5:#103ecb', '1:#0a2a98']],
        ['g13', ['0:#000a3c', '.4:#001c84', '1:#1242cf']], ['g14', ['0:#000628', '.6:#02123c', '1:#00081e']],
      ] as [string, string[]][]).map(([id, stops]) => (
        <linearGradient id={id} key={id}>
          {stops.map(s => { const [o, c] = s.split(':'); return <stop key={o} offset={o} stopColor={c} />; })}
        </linearGradient>
      ))}
    </defs>
    <rect width="2560" height="48" fill="url(#sky)" />
    <path d="M497 0H1979Q1962 22 1947 48H549Q522 24 497 0z" fill="#0026a4" />
    <path d="M497 0h70l64 48h-82Q522 24 497 0z" fill="url(#g1)" />
    <path d="M564 0h120q12 22 20 48h-76Q592 24 564 0z" fill="url(#g2)" />
    <path d="M684 0h112l21 48H704Q696 22 684 0z" fill="url(#g3)" />
    <path d="M794 0h30q6 24 7 48h-14Q808 24 794 0zM842 0h24q4 24 5 48h-12Q854 24 842 0z" fill="url(#g4)" />
    <path d="M868 0h188q12 24 15 48H872z" fill="url(#g5)" />
    <path d="M1055 0h20q9 24 12 48h-17Q1066 20 1055 0zM1079 0h15q10 24 14 48h-17Q1088 20 1079 0z" fill="url(#g4)" />
    <path d="M1095 0h22q10 22 16 48h-25Q1104 20 1095 0z" fill="#0b46d6" />
    <path d="M1117 0h89l9 48h-82Q1127 22 1117 0z" fill="url(#g6)" />
    <path d="M1206 0h34l16 48h-43z" fill="#0838c8" />
    <path d="M1240 0h40l42 48h-67z" fill="url(#g7)" />
    <path d="M1276 0h380v48h-336Q1300 22 1276 0z" fill="url(#g8)" />
    <path d="M1380 0q50 19 140 24t120-2v8q-80 4-160 2t-130 16h210V48H1330Q1400 34 1440 26z" fill="#000d58" opacity=".8" />
    <path d="M1383 0q47 20 137 25t120-9v16q-80-2-150 0t-120 16h-36Q1410 26 1450 20 1420 14 1383 0z" fill="url(#g9)" opacity=".85" />
    <path d="M1610 6q20-6 40-6h132Q1735 32 1610 32z" fill="url(#g10)" />
    <path d="M1610 32Q1735 32 1782 0h22l-34 48H1610z" fill="url(#g11)" />
    <path d="M1774 4L1804 0q-5 22-22 48h-22z" fill="#000628" />
    <path d="M1801 0h19q-4 26-20 48h-36q30-18 37-48z" fill="url(#g12)" />
    <path d="M1820 0h104q-30 28-66 48h-58q16-22 20-48z" fill="url(#g13)" />
    <path d="M1923 0h56q-18 24-32 48h-89q36-20 65-48z" fill="url(#g14)" />
    <path d="M1890 48q40-30 72-48l-50 48z" fill="#2a4a8c" opacity=".35" />
    <path d="M1979 0q-18 24-32 48" fill="none" stroke="#eef4fa" strokeWidth="1" />
  </Wallpaper>
);

/* ---------- Data ---------- */

const columnName = (i: number) => (i < 26 ? '' : 'A') + String.fromCharCode(65 + (i % 26));
const COLUMNS = Array.from({ length: 35 }, (_, i) => columnName(i));
const ROWS = Array.from({ length: 51 }, (_, i) => i + 1);
const TABS = ['파일', '홈', '삽입', '페이지 레이아웃', '수식', '데이터', '검토', '보기', '도움말'];
const STYLES: [string, Look][] = [
  ['표준', { bg: '#fff', fg: '#000', look: 'picked' }],
  ['나쁨', { bg: '#ffc7ce', fg: '#9c0006' }],
  ['보통', { bg: '#ffeb9c', fg: '#9c5700' }],
  ['좋음', { bg: '#c6efce', fg: '#006100' }],
  ['경고문', { fg: '#ff0000' }],
  ['계산', { bg: '#f2f2f2', fg: '#fa7d00', line: '#7f7f7f', look: 'bold' }],
  ['메모', { bg: '#ffffcc', fg: '#000', line: '#b2b2b2' }],
  ['설명 텍스트', { fg: '#7f7f7f', look: 'note' }],
  ['셀 확인', { bg: '#a5a5a5', fg: '#fff', look: 'check' }],
  ['연결된 셀', { fg: '#fa7d00', look: 'linked' }],
];

const DropButton = ({ of }: { of: string }) => <Drop aria-label={`${of} 옵션`}><Chevron /></Drop>;

const Combo = ({ w, label, value }: { w: number; label: string; value: string }) => (
  <ComboBox $w={w}><select aria-label={label} defaultValue={value}><option>{value}</option></select><Chevron /></ComboBox>
);

const Big = ({ w = 42, icon, line1, line2 }: { w?: number; icon: React.ReactNode; line1: string; line2?: string }) => (
  <BigButton $w={w}><BigIcon>{icon}</BigIcon><BigLine>{line1}</BigLine><BigLine>{line2}<Chevron /></BigLine></BigButton>
);

const RibbonGroup = ({ w, left, name, launcher, children }: { w: number; left: number; name: string; launcher?: boolean; children: React.ReactNode }) => (
  <Group $w={w}>
    <GroupBody $left={left}>{children}</GroupBody>
    <GroupFoot><span>{name}</span>{launcher && <button aria-label={`${name} 설정`}><Launcher /></button>}</GroupFoot>
  </Group>
);

export default function App() {
  return (
    <Window>
      <GlobalStyle />
      <TitleBar>
        <TitleLeft>
          <QuickAccess>
            <QuickButton aria-label="저장"><SaveIcon /></QuickButton>
            <Spacer />
            <QuickButton $w={18} $dim aria-label="실행 취소"><UndoIcon /></QuickButton>
            <QuickButton $w={9} $dim aria-label="실행 취소 목록"><Chevron color="currentColor" /></QuickButton>
            <QuickButton $w={22} $dim aria-label="다시 실행"><RedoIcon /></QuickButton>
            <QuickButton $w={9} $dim aria-label="다시 실행 목록"><Chevron color="currentColor" /></QuickButton>
            <Spacer />
            <QuickButton $w={20} aria-label="빠른 실행 도구 모음">
              <Svg w={8} h={8} stroke="currentColor"><path d="M.5 1h7M1 4l3 3 3-3" strokeWidth="1.400" /></Svg>
            </QuickButton>
          </QuickAccess>
          <DocTitle>{'통합 문서2  -  Excel'}</DocTitle>
        </TitleLeft>
        <SearchBox>
          <Svg w={15} h={15} stroke="currentColor"><circle cx="9" cy="5.500" r="4.800" /><path d="M6 9.500L.8 14.500" strokeWidth="1.200" /></Svg>
          <input aria-label="검색" placeholder="검색" />
        </SearchBox>
        <TitleRight>
          <LoginButton>로그인</LoginButton>
          <WindowButton aria-label="리본 표시 옵션"><Svg w={13} h={11} stroke="currentColor"><path d="M.6.6h11.800v9.300H.6zM.6 2.500h11.800M6.500 9V4.500M4.500 6.500l2-2 2 2" strokeWidth="1.200" /></Svg></WindowButton>
          <WindowButton aria-label="최소화"><Svg w={10} h={3} stroke="currentColor"><path d="M0 .5h10" /></Svg></WindowButton>
          <WindowButton aria-label="이전 크기로"><Svg w={11} h={11} stroke="currentColor"><rect x=".5" y="2.500" width="8" height="8" rx="1" /><path d="M2.500.5H9q1.500 0 1.500 1.500v6.500" /></Svg></WindowButton>
          <WindowButton aria-label="닫기"><Svg w={11} h={11} stroke="currentColor"><path d="M.5.5l10 10M10.500.5l-10 10" strokeWidth="1.200" /></Svg></WindowButton>
        </TitleRight>
      </TitleBar>

      <TabBar>
        {TABS.map(t => <Tab key={t} href="#" $active={t === '홈'}>{t}</Tab>)}
        <ShareButton><ShareIcon />공유</ShareButton>
      </TabBar>

      <Ribbon>
        <RibbonGroup w={150} left={6} name="클립보드" launcher>
          <Big w={58} icon={<PasteIcon />} line1="붙여넣기" />
          <List $gap={2}>
            <ListItem><TextButton><CutIcon />잘라내기</TextButton></ListItem>
            <ListItem $gap={8}><TextButton><CopyIcon />복사</TextButton><DropButton of="복사" /></ListItem>
            <ListItem><TextButton><BrushIcon />서식 복사</TextButton></ListItem>
          </List>
        </RibbonGroup>

        <RibbonGroup w={278} left={7} name="글꼴" launcher>
          <Lines>
            <Line>
              <Combo w={172} label="글꼴" value="맑은 고딕" />
              <Combo w={40} label="글꼴 크기" value="11" />
              <Tool aria-label="글꼴 크게"><GrowIcon /></Tool>
              <Tool aria-label="글꼴 작게"><GrowIcon down /></Tool>
            </Line>
            <Line>
              <Tool><Glyph $b>가</Glyph></Tool>
              <Tool><Glyph $i>가</Glyph></Tool>
              <Tool><Glyph $u>가</Glyph></Tool>
              <DropButton of="밑줄" />
              <Sep $lead={6} />
              <Tool aria-label="테두리"><BordersIcon /></Tool>
              <DropButton of="테두리" />
              <Sep $lead={6} />
              <Tool aria-label="채우기 색"><FillIcon /></Tool>
              <DropButton of="채우기 색" />
              <Spacer />
              <Tool aria-label="글꼴 색"><ColorBar>가</ColorBar></Tool>
              <DropButton of="글꼴 색" />
              <Sep $lead={6} />
              <Tool aria-label="윗주"><PhoneticIcon /></Tool>
              <DropButton of="윗주" />
            </Line>
          </Lines>
        </RibbonGroup>

        <RibbonGroup w={311} left={7} name="맞춤" launcher>
          <Lines>
            <Line>
              <Tool aria-label="위쪽 맞춤"><TextLines rows={SHORT} top={-2} /></Tool>
              <Tool $on aria-label="가운데 맞춤(세로)"><TextLines rows={SHORT} top={1} /></Tool>
              <Tool aria-label="아래쪽 맞춤"><TextLines rows={SHORT} top={5} /></Tool>
              <Sep />
              <Tool aria-label="방향"><OrientIcon /></Tool>
              <DropButton of="방향" />
            </Line>
            <Line>
              <Tool aria-label="왼쪽 맞춤"><TextLines rows={L4} top={0} /></Tool>
              <Tool aria-label="가운데 맞춤"><TextLines rows={C4} top={0} /></Tool>
              <Tool aria-label="오른쪽 맞춤"><TextLines rows={R4} top={0} /></Tool>
              <Sep />
              <Tool aria-label="내어쓰기"><IndentIcon /></Tool>
              <Tool aria-label="들여쓰기"><IndentIcon more /></Tool>
            </Line>
          </Lines>
          <TallSep />
          <Lines>
            <Line><TextButton><WrapIcon />자동 줄 바꿈</TextButton></Line>
            <Line><TextButton><MergeIcon />병합하고 가운데 맞춤</TextButton><Spacer /><Spacer /><Spacer /><DropButton of="병합" /></Line>
          </Lines>
        </RibbonGroup>

        <RibbonGroup w={156} left={8} name="표시 형식" launcher>
          <Lines>
            <Line><Combo w={140} label="표시 형식" value="일반" /></Line>
            <Line>
              <Tool aria-label="회계 표시 형식"><MoneyIcon /></Tool>
              <DropButton of="회계 표시 형식" />
              <Spacer />
              <Tool><Glyph $size={19}>%</Glyph></Tool>
              <Tool aria-label="쉼표 스타일"><CommaIcon /></Tool>
              <Sep />
              <Tool aria-label="자릿수 늘림"><DecimalIcon /></Tool>
              <Tool aria-label="자릿수 줄임"><DecimalIcon less /></Tool>
            </Line>
          </Lines>
        </RibbonGroup>

        <RibbonGroup w={652} left={8} name="스타일">
          <Big icon={<CondIcon />} line1="조건부" line2="서식" />
          <Big icon={<TableIcon />} line1="표" line2="서식" />
          <Gallery>
            <Swatches>{STYLES.map(([name, look]) => <Swatch key={name} $s={look}>{name}</Swatch>)}</Swatches>
            <GalleryScroll>
              <button aria-label="위로"><Chevron up color="#b8b6b4" /></button>
              <button aria-label="아래로"><Chevron /></button>
              <button aria-label="자세히"><Svg w={7} h={8}><path d="M0 1h7M.5 4l3 3 3-3" strokeWidth="1.400" /></Svg></button>
            </GalleryScroll>
          </Gallery>
        </RibbonGroup>

        <RibbonGroup w={142} left={8} name="셀">
          <Big icon={<InsertIcon />} line1="삽입" />
          <Big icon={<DeleteIcon />} line1="삭제" />
          <Big icon={<FormatIcon />} line1="서식" />
        </RibbonGroup>

        <RibbonGroup w={203} left={11} name="편집">
          <List $gap={1} $w={93}>
            <ListItem $gap={8}><TextButton><SumIcon />자동 합계</TextButton><DropButton of="자동 합계" /></ListItem>
            <ListItem $gap={2}><TextButton><FillDownIcon />채우기</TextButton><DropButton of="채우기" /></ListItem>
            <ListItem $gap={2}><TextButton><EraserIcon />지우기</TextButton><DropButton of="지우기" /></ListItem>
          </List>
          <Big w={45} icon={<SortIcon />} line1="정렬 및" line2="필터" />
          <Big w={45} icon={<FindIcon />} line1="찾기 및" line2="선택" />
        </RibbonGroup>
        <CollapseButton aria-label="리본 축소"><Svg w={10} h={6}><path d="M.5 5.500l4.500-4.500 4.500 4.500" strokeWidth="1.500" /></Svg></CollapseButton>
      </Ribbon>

      <FormulaBar>
        <FieldBox $w={102}>
          <input aria-label="이름 상자" defaultValue="A1" />
          <button aria-label="이름 목록"><Tri d={DOWN} /></button>
        </FieldBox>
        <Grip $before={14} $after={14} />
        <MarkBox $w={110}>
          <button aria-label="취소"><Svg w={11} h={11} stroke="#c0c0c0"><path d="M1 1l9 9M10 1l-9 9" strokeWidth="2" /></Svg></button>
          <button aria-label="입력"><Svg w={14} h={11} stroke="#c0c0c0"><path d="M1 6l4 4 8-9" strokeWidth="2.500" /></Svg></button>
          <button aria-label="함수 삽입"><FxMark><b>f</b>x</FxMark></button>
        </MarkBox>
        <FieldBox>
          <input aria-label="수식 입력줄" />
          <button aria-label="수식 입력줄 확장"><Svg w={8} h={6} stroke="#777"><path d="M.7 1L4 4.300 7.300 1" strokeWidth="2.200" /></Svg></button>
        </FieldBox>
      </FormulaBar>

      <SheetArea>
        <SheetPane>
          <SheetClip>
            <Sheet>
              <thead>
                <tr>
                  <Corner aria-label="모두 선택"><svg width="13" height="13" viewBox="0 0 13 13"><path d="M13 0v13H0z" fill="#b2b2b2" /></svg></Corner>
                  {COLUMNS.map(c => <ColHead key={c} $on={c === 'A'}>{c}</ColHead>)}
                </tr>
              </thead>
              <tbody>
                {ROWS.map(r => (
                  <tr key={r}>
                    <RowHead $on={r === 1}>{r}</RowHead>
                    {COLUMNS.map(c => (r === 1 && c === 'A' ? <ActiveCell key={c} /> : <td key={c} />))}
                  </tr>
                ))}
              </tbody>
            </Sheet>
          </SheetClip>
        </SheetPane>
        <VScroll>
          <ScrollButton aria-label="위로 스크롤"><Tri d={UP} /></ScrollButton>
          <VTrack><div /></VTrack>
          <ScrollButton aria-label="아래로 스크롤"><Tri d={DOWN} /></ScrollButton>
        </VScroll>
      </SheetArea>

      <SheetTabs>
        <NavButton aria-label="이전 시트"><Tri d={LEFT} /></NavButton>
        <NavButton aria-label="다음 시트"><Tri d={RIGHT} /></NavButton>
        <SheetTab>Sheet1</SheetTab>
        <AddSheet aria-label="새 시트"><Svg w={16} h={16} stroke="#777"><circle cx="8" cy="8" r="7.500" /><path d="M8 4v8M4 8h8" strokeWidth="2" /></Svg></AddSheet>
        <Push />
        <Grip $before={0} $after={15} />
        <HScroll>
          <ScrollButton aria-label="왼쪽으로 스크롤"><Tri d={LEFT} /></ScrollButton>
          <HTrack><div /></HTrack>
          <ScrollButton aria-label="오른쪽으로 스크롤"><Tri d={RIGHT} /></ScrollButton>
        </HScroll>
      </SheetTabs>

      <StatusBar>
        <span>준비</span>
        <Push />
        <ViewButton $on aria-label="기본 보기"><Svg w={14} h={14} shapeRendering="crispEdges"><path d="M.5.5h12v12H.5zM4.500 0v13M8.500 0v13M0 4.500h13M0 8.500h13" /></Svg></ViewButton>
        <ViewButton aria-label="페이지 레이아웃 보기"><Svg w={14} h={14} shapeRendering="crispEdges"><path d="M.5.5h13v12H.5zM3.500 2.500h7v8h-7zM5 4.500h4M5 6.500h4M5 8.500h4" /></Svg></ViewButton>
        <ViewButton aria-label="페이지 나누기 미리 보기"><Svg w={14} h={14} shapeRendering="crispEdges"><path d="M.5.5h13v12H.5zM.5 7.500h8M8.500 7.500V.5M4.500 7.500V.5" /></Svg></ViewButton>
        <Spacer />
        <ZoomStep aria-label="축소"><Svg w={8} h={8}><path d="M0 4h8" strokeWidth="1.200" /></Svg></ZoomStep>
        <ZoomSlider type="range" aria-label="확대/축소" defaultValue={50} />
        <ZoomStep aria-label="확대"><Svg w={8} h={8}><path d="M0 4h8M4 0v8" strokeWidth="1.200" /></Svg></ZoomStep>
        <ZoomValue>100%</ZoomValue>
      </StatusBar>

      <TaskBar>
        <Backdrop />
        <Pinned>
          <Pin aria-label="시작"><StartIcon /></Pin>
          <Pin aria-label="찾기"><TaskSearch /></Pin>
          <Pin aria-label="작업 보기"><TaskView /></Pin>
          <Pin aria-label="µTorrent"><Torrent /></Pin>
          <Pin aria-label="1D"><OneD /></Pin>
          <Pin aria-label="동영상"><Reel /></Pin>
          <Pin aria-label="이미지 뷰어"><EyeIcon /></Pin>
          <Pin aria-label="메모장"><NoteIcon /></Pin>
          <Pin aria-label="폴더"><CyanFolder /></Pin>
          <Pin aria-label="탐색기"><Explorer /></Pin>
          <Pin aria-label="Chrome"><Chrome /></Pin>
          <Pin aria-label="Edge"><Edge /><Marker $c="#04103c" $w={6} /></Pin>
          <Pin aria-label="Chrome 창"><Chrome /><Marker $c="#04103c" $w={6} /></Pin>
          <Pin aria-label="탐색기 창"><Explorer /><Marker $c="#04103c" $w={6} /></Pin>
          <Pin $state="alert" aria-label="Office"><Office /><Marker $c="#c42b1c" $w={6} /></Pin>
          <Pin $state="open" aria-label="Excel"><ExcelIcon /><Marker $c="#0a74d6" $w={16} /></Pin>
        </Pinned>
        <Tray>
          <TrayButton $w={18} aria-label="µTorrent 상태"><Torrent size={16} /></TrayButton>
          <TrayButton $w={36}>A</TrayButton>
          <TrayButton $w={30} aria-label="네트워크">
            <Svg w={17} h={16} stroke="#111"><path d="M11 2.500H1.500q-1 0-1 1v8q0 1 1 1h11.500M5.500 12.500v2.500M9.500 12.500v2.500M3.500 15.500h8M12.500.5h4v5h-4zM14.500 5.500V14M12.500 3h4" strokeWidth="1.200" /></Svg>
          </TrayButton>
          <TrayButton $w={18} aria-label="볼륨">
            <Svg w={17} h={14} stroke="#111"><path d="M.6 4.500h3L7.500 1v12L3.600 9.500h-3zM10 4.500q2 2.500 0 5M12.500 2.500q3.500 4.500 0 9M14.500 1q4 6 0 12" strokeWidth="1.200" /></Svg>
          </TrayButton>
          <Clock dateTime="2021-09-28T16:57">오후 4:57<br />2021-09-28</Clock>
        </Tray>
      </TaskBar>
      <PreviewShade />
    </Window>
  );
}
